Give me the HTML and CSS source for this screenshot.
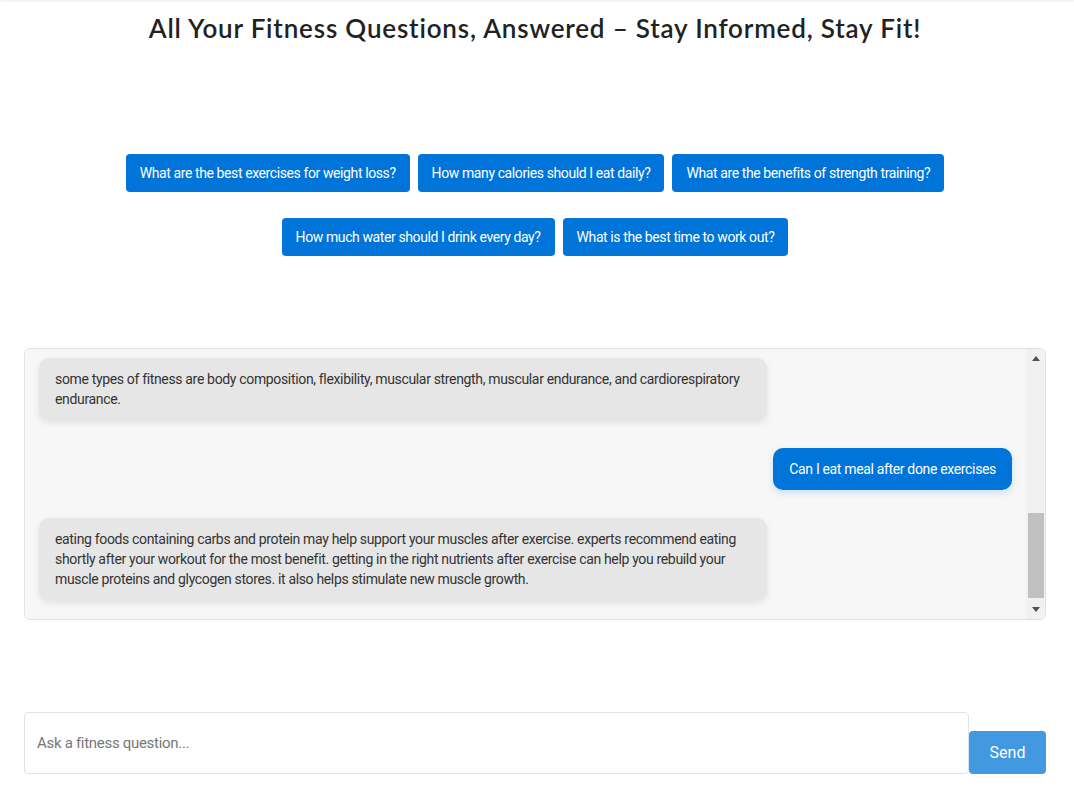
FILE: index.html
```html
<!DOCTYPE html>
<html lang="en">
<head>
<meta charset="utf-8">
<title>Fitness Q&amp;A</title>
<link rel="stylesheet" href="styles.css">
</head>
<body>
<div class="page">
  <header class="header">
    <h1 class="title">All Your Fitness Questions, Answered – Stay Informed, Stay Fit!</h1>
  </header>

  <section class="suggestions">
    <button class="suggestion">What are the best exercises for weight loss?</button>
    <button class="suggestion">How many calories should I eat daily?</button>
    <button class="suggestion">What are the benefits of strength training?</button>
    <button class="suggestion">How much water should I drink every day?</button>
    <button class="suggestion">What is the best time to work out?</button>
  </section>

  <section class="chat-box">
    <div class="chat-scroll">
      <div class="messages">
        <div class="msg bot">hello! i am your fitness assistant. ask me anything about workouts, nutrition, hydration, recovery or healthy habits and i will do my best to help you.</div>
        <div class="msg user">What are the benefits of strength training?</div>
        <div class="msg bot">strength training helps you build muscle, burn more calories and keep your bones strong. it can also improve your balance, posture and joint health, reduce the risk of injury and boost your mood and energy levels, making everyday tasks easier as you get older and stronger every single week.</div>
        <div class="msg user">How much water should I drink every day?</div>
        <div class="msg bot">most adults need around 2 to 3 litres of water a day, and more when you exercise or when it is hot. drink regularly through the day and before, during and after your workouts.</div>
        <div class="msg user">What are the types of fitness?</div>
        <div class="msg bot">some types of fitness are body composition, flexibility, muscular strength, muscular endurance, and cardiorespiratory endurance.</div>
        <div class="msg user">Can I eat meal after done exercises</div>
        <div class="msg bot">eating foods containing carbs and protein may help support your muscles after exercise. experts recommend eating shortly after your workout for the most benefit. getting in the right nutrients after exercise can help you rebuild your muscle proteins and glycogen stores. it also helps stimulate new muscle growth.</div>
      </div>
    </div>
    <div class="scrollbar" aria-hidden="true">
      <div class="sb-btn"><span class="sb-arrow up"></span></div>
      <div class="sb-track"><div class="sb-thumb"></div></div>
      <div class="sb-btn"><span class="sb-arrow down"></span></div>
    </div>
  </section>

  <form class="ask">
    <input class="ask-input" type="text" placeholder="Ask a fitness question...">
    <button class="ask-send" type="button">Send</button>
  </form>
</div>
</body>
</html>
```

FILE: styles.css
```css
* { box-sizing: border-box; }

html, body {
  margin: 0;
  padding: 0;
  background: #ffffff;
}

body {
  font-family: Roboto, "Liberation Sans", Arial, sans-serif;
  color: #333333;
}

.page {
  padding: 0 28px 0 24px;
  box-shadow: inset 0 3px 3px -2px rgba(0, 0, 0, 0.07);
}

.header {
  padding-top: 12px;
  text-align: center;
}

.title {
  margin: 0;
  font-family: Lato, "Open Sans", sans-serif;
  font-weight: 600;
  font-size: 26px;
  line-height: 32px;
  letter-spacing: 0.82px;
  color: #222222;
}

.suggestions {
  margin-top: 110px;
  display: flex;
  flex-wrap: wrap;
  justify-content: center;
  gap: 26px 8px;
  padding: 0 90px;
}

.suggestion {
  font-family: Roboto, "Liberation Sans", Arial, sans-serif;
  font-size: 14px;
  line-height: 18px;
  letter-spacing: -0.4px;
  color: #ffffff;
  background: #0074d9;
  border: none;
  border-radius: 4px;
  padding: 10px 14px;
  cursor: pointer;
}

.chat-box {
  margin-top: 92px;
  height: 272px;
  background: #f7f7f7;
  border: 1px solid #e3e3e3;
  border-radius: 6px;
  display: flex;
  overflow: hidden;
}

.chat-scroll {
  flex: 1;
  overflow: hidden;
  display: flex;
  flex-direction: column-reverse;
}

.messages {
  display: flex;
  flex-direction: column;
  padding: 5px 14px;
}

.msg {
  font-size: 14px;
  line-height: 20px;
  letter-spacing: -0.34px;
  padding: 11px 16px;
  border-radius: 10px;
  margin: 14px 0;
  max-width: 728px;
}

.bot {
  align-self: flex-start;
  background: #e6e6e6;
  color: #333333;
  box-shadow: 0 3px 7px rgba(0, 0, 0, 0.09);
}

.user {
  align-self: flex-end;
  background: #0074d9;
  color: #ffffff;
  box-shadow: 0 3px 7px rgba(0, 116, 217, 0.18);
}

.scrollbar {
  width: 19px;
  flex: none;
  background: #f1f1f1;
  display: flex;
  flex-direction: column;
}

.sb-btn {
  height: 19px;
  flex: none;
  display: flex;
  align-items: center;
  justify-content: center;
}

.sb-arrow {
  width: 0;
  height: 0;
  border-left: 4.5px solid transparent;
  border-right: 4.5px solid transparent;
}

.sb-arrow.up {
  border-bottom: 5px solid #505050;
}

.sb-arrow.down {
  border-top: 5px solid #505050;
}

.sb-track {
  flex: 1;
  display: flex;
  flex-direction: column;
  justify-content: flex-end;
  padding: 0 1px 2px 2px;
}

.sb-thumb {
  height: 85px;
  background: #c1c1c1;
}

.ask {
  margin-top: 92px;
  display: flex;
  align-items: flex-end;
}

.ask-input {
  flex: 1;
  height: 62px;
  padding: 0 12px;
  font-family: Roboto, "Liberation Sans", Arial, sans-serif;
  font-size: 15px;
  letter-spacing: -0.3px;
  color: #333333;
  border: 1px solid #dde4ec;
  border-radius: 4px;
  background: #ffffff;
  outline: none;
}

.ask-input::placeholder {
  color: #777777;
}

.ask-send {
  width: 77px;
  height: 43px;
  font-family: Roboto, "Liberation Sans", Arial, sans-serif;
  font-size: 16px;
  color: #ffffff;
  background: #4299e1;
  border: none;
  border-radius: 4px;
  cursor: pointer;
}
```
